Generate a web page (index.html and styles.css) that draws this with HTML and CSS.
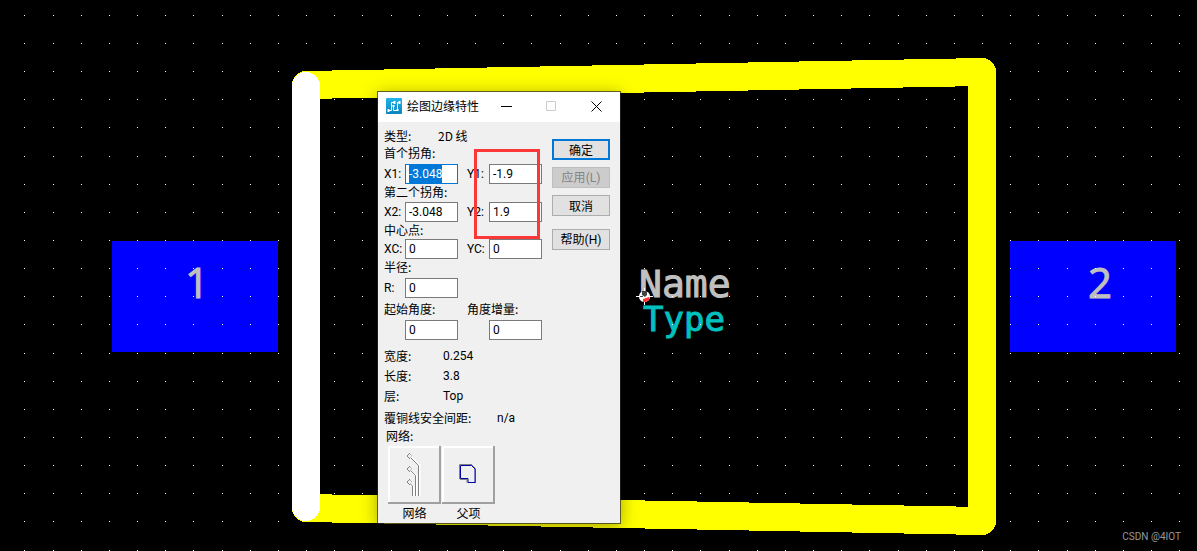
FILE: index.html
```html
<!DOCTYPE html>
<html lang="zh-CN">
<head>
<meta charset="utf-8">
<title>绘图边缘特性</title>
<link rel="stylesheet" href="styles.css">
</head>
<body>
<main class="workspace">
  <svg class="board" aria-label="PCB">
    <defs>
      <pattern id="grid" x="24" y="15" width="169" height="197" patternUnits="userSpaceOnUse">
        <g fill="#fff">
          <path id="gridrow" d="M0 0h1v1h-1zM29 0h1v1h-1zM57 0h1v1h-1zM85 0h1v1h-1zM113 0h1v1h-1zM141 0h1v1h-1z"/>
          <use href="#gridrow" y="28"/><use href="#gridrow" y="56"/><use href="#gridrow" y="84"/>
          <use href="#gridrow" y="112"/><use href="#gridrow" y="141"/><use href="#gridrow" y="169"/>
        </g>
      </pattern>
    </defs>
    <rect class="pad" x="112" y="241" width="166" height="111"/>
    <rect class="pad" x="1010" y="241" width="166" height="111"/>
    <text class="silk pin" x="185" y="298">1</text>
    <text class="silk pin" x="1088" y="298">2</text>
    <text class="silk" x="639" y="297">Name</text>
    <text class="silk silk-type" x="643" y="331">Type</text>
    <rect width="100%" height="100%" fill="url(#grid)"/>
    <path class="outline" d="M306 85L982 72V521L306 508"/>
    <path class="outline picked" d="M306 86V507"/>
    <g>
      <path d="M636 296.5h17M644.5 288v17" stroke="#fff"/>
      <circle cx="644.5" cy="296.500" r="5.500" fill="#fff"/>
      <path d="M642 291h5v4l-2 2-3-2z" fill="#444"/>
      <path d="M643 299l6-2v3l-3 2h-3z" fill="#f33"/>
      <path d="M640 296.500h3" stroke="#444"/>
    </g>
  </svg>

  <section class="dialog" role="dialog" aria-labelledby="dialog-title">
    <header class="titlebar">
      <svg class="app-icon" viewBox="0 0 16 16" aria-hidden="true">
        <defs><linearGradient id="sky" x2="0" y2="1"><stop stop-color="#20b4ea"/><stop offset="1" stop-color="#0a84bd"/></linearGradient></defs>
        <rect width="16" height="16" rx="1" fill="url(#sky)"/>
        <path d="M2 12.500h3.500v-8H9M7.500 8v4.500h4v-8H14" fill="none" stroke="#fff"/>
        <path d="M1.500 11h2v3h-2zM7.500 3h2v3h-2zM6.500 7h2v2h-2zM12.500 3h2v3h-2zM10.500 11h2v2h-2z" fill="#fff"/>
      </svg>
      <h1 class="title" id="dialog-title">绘图边缘特性</h1>
      <div class="window-buttons">
        <button class="window-button" aria-label="最小化"><svg viewBox="0 0 11 11"><path d="M0 5.500h11"/></svg></button>
        <button class="window-button" aria-label="最大化" disabled><svg viewBox="0 0 11 11"><path d="M.5.5h9v9H.5z"/></svg></button>
        <button class="window-button" aria-label="关闭"><svg viewBox="0 0 11 11"><path d="M.5.5l10 10M10.500.5l-10 10"/></svg></button>
      </div>
    </header>

    <form class="content">
      <div class="properties">
        <div class="line type-line"><span>类型:</span><span>2D 线</span></div>
        <div class="line first-corner">首个拐角:</div>
        <div class="fields">
          <label for="x1">X1:</label><input id="x1" value="-3.048">
          <label for="y1">Y1:</label><input id="y1" value="-1.9">
        </div>
        <div class="line">第二个拐角:</div>
        <div class="fields">
          <label for="x2">X2:</label><input id="x2" value="-3.048">
          <label for="y2">Y2:</label><input id="y2" value="1.9">
        </div>
        <div class="line center-point">中心点:</div>
        <div class="fields">
          <label for="xc">XC:</label><input id="xc" value="0">
          <label for="yc">YC:</label><input id="yc" value="0">
        </div>
        <div class="line radius">半径:</div>
        <div class="fields"><label for="r">R:</label><input id="r" value="0"></div>
        <div class="angles">
          <label for="start">起始角度:</label><label for="delta">角度增量:</label>
          <input id="start" value="0"><input id="delta" value="0">
        </div>
        <dl class="facts">
          <dt>宽度:</dt><dd>0.254</dd>
          <dt>长度:</dt><dd>3.8</dd>
          <dt>层:</dt><dd>Top</dd>
        </dl>
        <div class="line clearance"><span>覆铜线安全间距:</span><span class="value">n/a</span></div>
        <div class="line net">网络:</div>
        <div class="tools">
          <div class="tool">
            <button type="button" class="tool-button" id="net-tool" aria-labelledby="net-label">
              <svg viewBox="0 0 53 58" fill="none">
                <path d="M23.500 11.500l8 8V50M22.500 25l6 5V50M22.500 38l3 3V50" stroke="#fff" stroke-width="2"/>
                <path d="M23 12l7.500 7.500V50M22.500 24.500l5 5V50M22.500 38l2 2V50" stroke="#808080"/>
                <path d="M22 7l-3 3 3 3M22 20l-3 3 3 3M22 33l-3 3 3 3" stroke="#808080"/>
                <path d="M22 8l2 2-2 2M22 21l2 2-2 2M22 34l2 2-2 2" stroke="#999" stroke-dasharray="1 1"/>
              </svg>
            </button>
            <label id="net-label" for="net-tool">网络</label>
          </div>
          <div class="tool">
            <button type="button" class="tool-button" id="parent-tool" aria-labelledby="parent-label">
              <svg viewBox="0 0 53 58" fill="none">
                <path d="M17.500 33V18.500H30M25 37v-3.500h-7" stroke="#808080"/>
                <path d="M18.500 19.500h11l4 4v13h-7.500v-4h-7.500z" stroke="#0000a8"/>
                <path d="M29.500 18.500l4 4v14" stroke="#808080"/>
                <path d="M33 23v13.500" stroke="#0000a8"/>
              </svg>
            </button>
            <label id="parent-label" for="parent-tool">父项</label>
          </div>
        </div>
      </div>
      <div class="actions">
        <button type="button" class="action primary">确定</button>
        <button type="button" class="action" disabled>应用<span>(L)</span></button>
        <button type="button" class="action">取消</button>
        <button type="button" class="action help">帮助<span>(H)</span></button>
      </div>
    </form>
  </section>
  <div class="highlight"></div>
  <div class="watermark">CSDN @4IOT</div>
</main>
<script src="main.js"></script>
</body>
</html>
```

FILE: styles.css
```css
* { box-sizing: border-box; }
body {
  margin: 0;
  background: #000;
  color: #000;
  font: 12px/18px "Noto Sans CJK SC", sans-serif;
}
button, input { font: inherit; color: inherit; }
.workspace { position: relative; min-height: 100vh; overflow: hidden; }

.board { position: absolute; inset: 0; width: 100%; height: 100%; }
.pad { fill: #00f; }
.outline {
  fill: none;
  stroke: #ff0;
  stroke-width: 28;
  stroke-linejoin: round;
  stroke-linecap: round;
  shape-rendering: crispEdges;
}
.picked { stroke: #fff; }
.silk {
  font: 38px "DejaVu Sans Mono", monospace;
  fill: #c0c0c0;
  stroke: #c0c0c0;
  stroke-width: 1;
}
.silk-type { font-size: 34px; fill: #00c0c0; stroke: #00c0c0; }
.pin { font-family: "Open Sans", sans-serif; font-size: 42px; }

.dialog {
  position: absolute;
  left: 377px;
  top: 91px;
  width: 244px;
  border: 1px solid rgba(40, 40, 40, .7);
  background: #f0f0f0;
  background-clip: padding-box;
  box-shadow: 0 3px 16px rgba(0, 0, 0, .35);
}
.titlebar { display: flex; align-items: center; height: 30px; padding: 0 1px 2px 8px; background: #fff; }
.app-icon { width: 16px; height: 16px; }
.title { margin: 0 0 0 5px; font-size: 12px; font-weight: 400; white-space: nowrap; }
.window-buttons { display: flex; margin-left: auto; }
.window-button {
  display: grid;
  place-items: center;
  width: 45px;
  height: 27px;
  padding: 0;
  border: 0;
  background: none;
}
.window-button svg { width: 11px; height: 11px; fill: none; stroke: #000; }
.window-button:disabled svg { stroke: #ccc; }

.content { display: flex; justify-content: space-between; padding: 6px 10px 1px 6px; }
.properties { width: 158px; }
.line { height: 18px; line-height: 16px; white-space: nowrap; }
.first-corner { height: 20px; line-height: 18px; }
.center-point { height: 17px; }
.radius { height: 19px; }
.type-line { display: grid; grid-template-columns: 54px auto; height: 16px; line-height: 16px; }
.fields { display: grid; grid-template-columns: 21px 62px 22px 53px; height: 20px; line-height: 20px; }
.fields label, .value, .facts dd, .action span, input { font-family: Roboto, sans-serif; font-size: 12px; }
input {
  width: 53px;
  height: 20px;
  padding: 0 3px;
  border: 1px solid #7a7a7a;
  border-radius: 0;
  background: #fff;
  outline: 0;
}
input:focus { border-color: #0078d7; }
input::selection { background: #0078d7; color: #fff; }
.angles { display: grid; grid-template-columns: 83px 75px; }
.angles label { line-height: 22px; }
.angles input { margin-left: 21px; }
.angles input:last-child { margin-left: 22px; }
.facts {
  display: grid;
  grid-template-columns: 59px auto;
  margin: 6px 0 4px;
  line-height: 20px;
}
.facts dd { margin: 0; }
.clearance { display: grid; grid-template-columns: 113px auto; }
.net { padding-left: 2px; }
.tools { display: flex; gap: 1px; padding-left: 4px; }
.tool { display: grid; width: 53px; text-align: center; }
.tool-button {
  width: 53px;
  height: 58px;
  padding: 0;
  border: 0;
  background: #f0f0f0;
  box-shadow: inset -2px -2px #a0a0a0, inset 2px 2px #fff;
}
.tool-button svg { display: block; width: 53px; height: 58px; }

.actions { display: flex; flex-direction: column; gap: 7px; width: 58px; padding-top: 11px; }
.action {
  height: 21px;
  padding: 0;
  border: 1px solid #adadad;
  background: #e1e1e1;
  line-height: 18px;
}
.primary { border: 2px solid #0078d7; line-height: 16px; }
.action:disabled { border-color: #bfbfbf; background: #ccc; color: #838383; }
.help { margin-top: 6px; }

.highlight {
  position: absolute;
  left: 474px;
  top: 149px;
  width: 66px;
  height: 90px;
  border: 3px solid #fc3737;
  pointer-events: none;
}
.watermark {
  position: absolute;
  right: 16px;
  bottom: 5px;
  color: #999;
  font: 10px/18px Roboto, sans-serif;
}
```

FILE: main.js
```js
const first = document.getElementById("x1");
first.focus();
first.select();
```
